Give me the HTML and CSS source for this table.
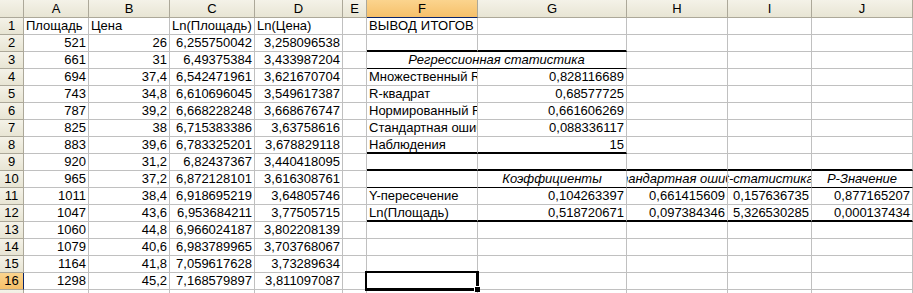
FILE: index.html
```html
<!DOCTYPE html>
<html lang="ru">
<head>
<meta charset="utf-8">
<title>Регрессия</title>
<link rel="stylesheet" href="styles.css">
</head>
<body>
<div class="sheet">
  <div class="row head">
    <div class="corner"></div>
    <div class="ch">A</div><div class="ch">B</div><div class="ch">C</div><div class="ch">D</div><div class="ch">E</div>
    <div class="ch sel">F</div><div class="ch">G</div><div class="ch">H</div><div class="ch">I</div><div class="ch">J</div>
  </div>

  <div class="row">
    <div class="rh">1</div>
    <div class="c">Площадь</div><div class="c">Цена</div><div class="c">Ln(Площадь)</div><div class="c">Ln(Цена)</div><div class="c"></div>
    <div class="c caps">ВЫВОД ИТОГОВ</div><div class="c"></div><div class="c"></div><div class="c"></div><div class="c"></div>
  </div>
  <div class="row">
    <div class="rh">2</div>
    <div class="c n">521</div><div class="c n">26</div><div class="c n">6,255750042</div><div class="c n">3,258096538</div><div class="c"></div>
    <div class="c thick"></div><div class="c thick"></div><div class="c"></div><div class="c"></div><div class="c"></div>
  </div>
  <div class="row">
    <div class="rh">3</div>
    <div class="c n">661</div><div class="c n">31</div><div class="c n">6,49375384</div><div class="c n">3,433987204</div><div class="c"></div>
    <div class="c span2 it thin"><span>Регрессионная статистика</span></div><div class="c"></div><div class="c"></div><div class="c"></div>
  </div>
  <div class="row">
    <div class="rh">4</div>
    <div class="c n">694</div><div class="c n">37,4</div><div class="c n">6,542471961</div><div class="c n">3,621670704</div><div class="c"></div>
    <div class="c">Множественный R</div><div class="c n">0,828116689</div><div class="c"></div><div class="c"></div><div class="c"></div>
  </div>
  <div class="row">
    <div class="rh">5</div>
    <div class="c n">743</div><div class="c n">34,8</div><div class="c n">6,610696045</div><div class="c n">3,549617387</div><div class="c"></div>
    <div class="c">R-квадрат</div><div class="c n">0,68577725</div><div class="c"></div><div class="c"></div><div class="c"></div>
  </div>
  <div class="row">
    <div class="rh">6</div>
    <div class="c n">787</div><div class="c n">39,2</div><div class="c n">6,668228248</div><div class="c n">3,668676747</div><div class="c"></div>
    <div class="c">Нормированный R-квадрат</div><div class="c n">0,661606269</div><div class="c"></div><div class="c"></div><div class="c"></div>
  </div>
  <div class="row">
    <div class="rh">7</div>
    <div class="c n">825</div><div class="c n">38</div><div class="c n">6,715383386</div><div class="c n">3,63758616</div><div class="c"></div>
    <div class="c">Стандартная ошибка</div><div class="c n">0,088336117</div><div class="c"></div><div class="c"></div><div class="c"></div>
  </div>
  <div class="row">
    <div class="rh">8</div>
    <div class="c n">883</div><div class="c n">39,6</div><div class="c n">6,783325201</div><div class="c n">3,678829118</div><div class="c"></div>
    <div class="c thick">Наблюдения</div><div class="c n thick">15</div><div class="c"></div><div class="c"></div><div class="c"></div>
  </div>
  <div class="row">
    <div class="rh">9</div>
    <div class="c n">920</div><div class="c n">31,2</div><div class="c n">6,82437367</div><div class="c n">3,440418095</div><div class="c"></div>
    <div class="c thick"></div><div class="c thick"></div><div class="c thick"></div><div class="c thick"></div><div class="c thick"></div>
  </div>
  <div class="row">
    <div class="rh">10</div>
    <div class="c n">965</div><div class="c n">37,2</div><div class="c n">6,872128101</div><div class="c n">3,616308761</div><div class="c"></div>
    <div class="c thin"></div>
    <div class="c it thin"><span>Коэффициенты</span></div>
    <div class="c it thin"><span>Стандартная ошибка</span></div>
    <div class="c it thin"><span>t-статистика</span></div>
    <div class="c it thin"><span>P-Значение</span></div>
  </div>
  <div class="row">
    <div class="rh">11</div>
    <div class="c n">1011</div><div class="c n">38,4</div><div class="c n">6,918695219</div><div class="c n">3,64805746</div><div class="c"></div>
    <div class="c">Y-пересечение</div><div class="c n">0,104263397</div><div class="c n">0,661415609</div><div class="c n">0,157636735</div><div class="c n">0,877165207</div>
  </div>
  <div class="row">
    <div class="rh">12</div>
    <div class="c n">1047</div><div class="c n">43,6</div><div class="c n">6,953684211</div><div class="c n">3,77505715</div><div class="c"></div>
    <div class="c thick">Ln(Площадь)</div><div class="c n thick">0,518720671</div><div class="c n thick">0,097384346</div><div class="c n thick">5,326530285</div><div class="c n thick">0,000137434</div>
  </div>
  <div class="row">
    <div class="rh">13</div>
    <div class="c n">1060</div><div class="c n">44,8</div><div class="c n">6,966024187</div><div class="c n">3,802208139</div><div class="c"></div>
    <div class="c"></div><div class="c"></div><div class="c"></div><div class="c"></div><div class="c"></div>
  </div>
  <div class="row">
    <div class="rh">14</div>
    <div class="c n">1079</div><div class="c n">40,6</div><div class="c n">6,983789965</div><div class="c n">3,703768067</div><div class="c"></div>
    <div class="c"></div><div class="c"></div><div class="c"></div><div class="c"></div><div class="c"></div>
  </div>
  <div class="row">
    <div class="rh">15</div>
    <div class="c n">1164</div><div class="c n">41,8</div><div class="c n">7,059617628</div><div class="c n">3,73289634</div><div class="c"></div>
    <div class="c"></div><div class="c"></div><div class="c"></div><div class="c"></div><div class="c"></div>
  </div>
  <div class="row">
    <div class="rh sel">16</div>
    <div class="c n">1298</div><div class="c n">45,2</div><div class="c n">7,168579897</div><div class="c n">3,811097087</div><div class="c"></div>
    <div class="c active"></div><div class="c"></div><div class="c"></div><div class="c"></div><div class="c"></div>
  </div>
  <div class="row">
    <div class="rh">17</div>
    <div class="c"></div><div class="c"></div><div class="c"></div><div class="c"></div><div class="c"></div>
    <div class="c"></div><div class="c"></div><div class="c"></div><div class="c"></div><div class="c"></div>
  </div>
</div>
</body>
</html>
```

FILE: styles.css
```css
html, body {
  margin: 0;
  padding: 0;
  background: #ffffff;
  overflow: hidden;
}

.sheet {
  width: 913px;
  height: 293px;
  overflow: hidden;
  font-family: "Liberation Sans", Arial, sans-serif;
  font-size: 13px;
  color: #000000;
}

.row {
  display: grid;
  grid-template-columns: 24px 65px 81px 85px 88px 24px 111px 149px 101px 84px 101px;
  height: 17px;
}

.row.head {
  height: 18px;
}

.corner,
.ch,
.rh {
  box-sizing: border-box;
  background: linear-gradient(#f4f2e8, #e8e5d4);
  border-right: 1px solid #aca899;
  border-bottom: 1px solid #aca899;
  line-height: 16px;
  text-align: center;
  overflow: hidden;
  white-space: nowrap;
}

.ch {
  line-height: 17px;
}

.ch.sel {
  background: linear-gradient(#fbd48e, #f6c06a);
  border-bottom-color: #0a246a;
}

.rh.sel {
  background: linear-gradient(#fbd48e, #f6c06a);
  border-right-color: #0a246a;
}

.c {
  box-sizing: border-box;
  border-right: 1px solid #c0c0c0;
  border-bottom: 1px solid #c0c0c0;
  padding: 0 2px;
  line-height: 16px;
  white-space: nowrap;
  overflow: hidden;
}

.caps {
  letter-spacing: 0.2px;
}

.n {
  text-align: right;
}

.span2 {
  grid-column: span 2;
}

.it {
  display: flex;
  justify-content: center;
  font-style: italic;
  padding: 0;
}

.it span {
  flex-shrink: 0;
}

.thick {
  border-bottom: 2px solid #000000;
}

.thin {
  border-bottom: 1px solid #000000;
}

.active {
  position: relative;
  overflow: visible;
}

.active::after {
  content: "";
  position: absolute;
  left: -2px;
  top: -2px;
  right: -2px;
  bottom: -2px;
  border: 2px solid #000000;
  border-right-width: 3px;
  border-bottom-width: 3px;
}

.active::before {
  content: "";
  position: absolute;
  right: -3px;
  bottom: -3px;
  width: 5px;
  height: 5px;
  background: #000000;
  border-left: 1px solid #ffffff;
  border-top: 1px solid #ffffff;
  z-index: 2;
}
```
